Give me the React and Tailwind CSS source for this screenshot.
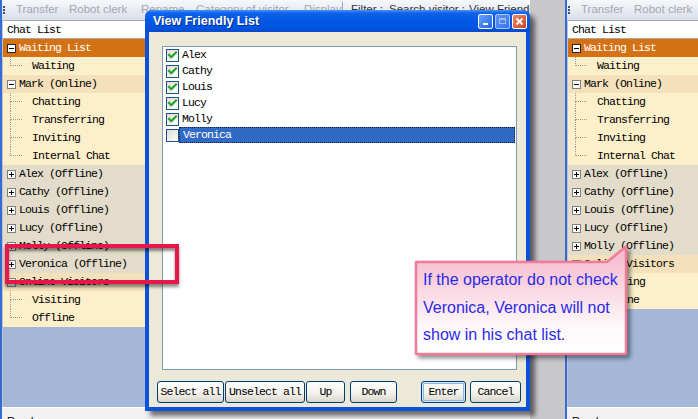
import React from 'react';

const mono = "font-['Liberation_Mono','DejaVu_Sans_Mono',monospace] text-[11.5px] tracking-[-0.9px]";

function Expander({ open, dark }) {
  return (
    <svg width="9" height="9" viewBox="0 0 9 9" className="shrink-0">
      <rect x="0.5" y="0.5" width="8" height="8" fill="#fff" stroke={dark ? '#2a2a2a' : '#808080'} />
      <line x1="2" y1="4.5" x2="7" y2="4.5" stroke="#000" />
      {!open && <line x1="4.5" y1="2" x2="4.5" y2="7" stroke="#000" />}
    </svg>
  );
}

const groupBg = {
  orange: 'bg-[#d47115] text-white',
  tan: 'bg-[#f4e1bb] text-black',
  grey: 'bg-[#e3dcca] text-black',
};

function TreeRow({ item }) {
  if (item.g) {
    return (
      <div className={`h-[18px] shrink-0 flex items-center pl-[4px] whitespace-nowrap ${groupBg[item.bg]}`}>
        <Expander open={item.open} dark={item.bg === 'orange'} />
        <span className={`ml-[3px] ${mono}`}>{item.label}</span>
      </div>
    );
  }
  return (
    <div className="h-[18px] shrink-0 flex items-stretch pl-[7px] bg-[#fcefca] whitespace-nowrap">
      <div className="w-[12px] flex flex-col shrink-0">
        <div className="h-[9px] border-l border-b border-dotted border-[#9a9a9a]" />
        <div className={`h-[9px] ${item.last ? '' : 'border-l border-dotted border-[#9a9a9a]'}`} />
      </div>
      <span className={`ml-[10px] self-center text-black ${mono}`}>{item.label}</span>
    </div>
  );
}

const offline = (n) => ({ g: true, open: false, bg: 'grey', label: `${n} (Offline)` });

const leftRows = [
  { g: true, open: true, bg: 'orange', label: 'Waiting List' },
  { label: 'Waiting', last: true },
  { g: true, open: true, bg: 'tan', label: 'Mark (Online)' },
  { label: 'Chatting' },
  { label: 'Transferring' },
  { label: 'Inviting' },
  { label: 'Internal Chat', last: true },
  offline('Alex'),
  offline('Cathy'),
  offline('Louis'),
  offline('Lucy'),
  offline('Molly'),
  offline('Veronica'),
  { g: true, open: true, bg: 'tan', label: 'Online Visitors' },
  { label: 'Visiting' },
  { label: 'Offline', last: true },
];
const rightRows = leftRows.filter((r) => r.label !== 'Veronica (Offline)');

function Grip() {
  return (
    <div className="ml-[1px] mr-[11px] flex flex-col gap-[1px] shrink-0">
      <div className="w-[2px] h-[2px] bg-[#3a5080]" />
      <div className="w-[2px] h-[2px] bg-[#3a5080]" />
      <div className="w-[2px] h-[2px] bg-[#3a5080]" />
    </div>
  );
}

function Toolbar() {
  return (
    <div className="h-[20px] shrink-0 flex items-center overflow-hidden whitespace-nowrap bg-[linear-gradient(to_bottom,#f7f8fb,#e4e8f0_60%,#d8dfeb)] font-['Liberation_Sans',Arial,sans-serif] text-[11.5px] text-[#a4a6ae]">
      <Grip />
      <span className="w-[53px] shrink-0">Transfer</span>
      <span className="w-[72px] shrink-0">Robot clerk</span>
      <span className="w-[55px] shrink-0">Rename</span>
      <span className="w-[108px] shrink-0">Category of visitor</span>
      <span className="w-[38px] shrink-0">Display</span>
      <div className="w-px h-[16px] bg-[#9fa8b8] mr-[8px] shrink-0" />
      <span className="w-[38px] shrink-0 text-[#333]">Filter :</span>
      <span className="w-[80px] shrink-0 text-[#333]">Search visitor :</span>
      <span className="shrink-0 text-[#333]">View Friendly</span>
    </div>
  );
}

function AppWindow({ rows, className, panelClass }) {
  return (
    <div className={`h-full flex flex-col border-l-[2px] border-[#356bd6] bg-[#ece9d8] overflow-hidden ${className}`}>
      <Toolbar />
      <div className="flex-1 flex min-h-0">
        <div className={`flex flex-col border-l border-[#c0c4cc] ${panelClass}`}>
          <div className={`h-[19px] shrink-0 flex items-center pl-[4px] bg-white border-y border-[#a8a8a8] text-black ${mono}`}>
            Chat List
          </div>
          {rows.map((r, i) => (
            <TreeRow key={i} item={r} />
          ))}
          <div className="flex-1 bg-[#a4b7d6]" />
        </div>
        <div className="flex-1 bg-[#d4d0c8]" />
      </div>
      <div className="h-[12px] shrink-0 overflow-hidden bg-[#f1f1f1] border-t border-white pl-[5px] pt-[7px] font-['Liberation_Sans',Arial,sans-serif] text-[11px] leading-[12px] text-black">
        Ready
      </div>
    </div>
  );
}

function Check({ checked }) {
  return (
    <svg width="13" height="13" viewBox="0 0 13 13" className="shrink-0">
      <defs>
        <linearGradient id="cbg" x1="0" y1="0" x2="1" y2="1">
          <stop offset="0" stopColor="#dcdcd6" />
          <stop offset="1" stopColor="#ffffff" />
        </linearGradient>
      </defs>
      <rect x="0.5" y="0.5" width="12" height="12" fill="url(#cbg)" stroke="#1c5180" />
      {checked && (
        <path d="M3 5.8 L5.2 8.2 L10 3.4" stroke="#21a121" strokeWidth="2" fill="none" strokeLinecap="square" />
      )}
    </svg>
  );
}

function Btn({ w, children, def }) {
  return (
    <div
      className={`h-[22px] shrink-0 ${w} rounded-[3px] border border-[#003c74] bg-[linear-gradient(to_bottom,#ffffff,#f3f2ec_55%,#d9d5cb)] flex items-center justify-center text-black ${mono} ${
        def ? 'shadow-[inset_0_0_0_1px_#cee7ff,inset_0_0_0_2px_#8fb2ea]' : ''
      }`}
    >
      {children}
    </div>
  );
}

const friends = [
  { n: 'Alex', c: true },
  { n: 'Cathy', c: true },
  { n: 'Louis', c: true },
  { n: 'Lucy', c: true },
  { n: 'Molly', c: true },
  { n: 'Veronica', c: false, sel: true },
];

function Dialog() {
  return (
    <div className="absolute left-[145px] top-[10px] w-[385px] h-[401px] flex flex-col rounded-t-[7px] bg-[#0a53d8] shadow-[5px_5px_5px_rgba(0,0,0,0.55)]">
      <div className="h-[22px] shrink-0 flex items-center pl-[8px] pr-[3px] rounded-t-[7px] bg-[linear-gradient(to_bottom,#4a92f8_0%,#0f62ea_14%,#0058e6_45%,#0053de_85%,#0a48c8_100%)]">
        <span className="text-white font-bold text-[12.5px] font-['Liberation_Sans',Arial,sans-serif] [text-shadow:1px_1px_0_#0b2f8a]">
          View Friendly List
        </span>
        <div className="ml-auto flex gap-[2px]">
          <div className="w-[15px] h-[15px] rounded-[2px] border border-white bg-[linear-gradient(135deg,#6aa2fb,#2465e6)] flex items-end pl-[4px] pb-[3px]">
            <div className="w-[5px] h-[2px] bg-white" />
          </div>
          <div className="w-[15px] h-[15px] rounded-[2px] border border-[#a8c4f6] bg-[linear-gradient(135deg,#5d95f5,#3a75ea)] flex items-center justify-center">
            <div className="w-[7px] h-[6px] border border-[#9cbcf2] border-t-2" />
          </div>
          <div className="w-[15px] h-[15px] rounded-[2px] border border-white bg-[linear-gradient(135deg,#ec8a66,#cd4420)] flex items-center justify-center">
            <svg width="9" height="9" viewBox="0 0 9 9">
              <path d="M1.5 1.5 L7.5 7.5 M7.5 1.5 L1.5 7.5" stroke="#fff" strokeWidth="1.8" />
            </svg>
          </div>
        </div>
      </div>
      <div className="flex-1 mx-[4px] mb-[4px] bg-[#ece9d8] flex flex-col">
        <div className="mt-[14px] ml-[13px] w-[355px] h-[324px] border border-[#7f9db9] bg-white flex flex-col">
          {friends.map((f) => (
            <div key={f.n} className="h-[16px] shrink-0 flex items-center pl-[3px]">
              <Check checked={f.c} />
              <div
                className={`h-[16px] flex items-center pl-[3px] ${mono} ${
                  f.sel ? 'flex-1 mr-[1px] bg-[#316ac5] text-white border border-dotted border-[#10204a]' : 'text-black'
                }`}
              >
                {f.n}
              </div>
            </div>
          ))}
        </div>
        <div className="mt-[11px] pl-[8px] flex">
          <Btn w="w-[67px]">Select all</Btn>
          <div className="w-px" />
          <Btn w="w-[80px]">Unselect all</Btn>
          <div className="w-px" />
          <Btn w="w-[39px]">Up</Btn>
          <div className="w-[5px]" />
          <Btn w="w-[47px]">Down</Btn>
          <div className="w-[24px]" />
          <Btn w="w-[45px]" def>
            Enter
          </Btn>
          <div className="w-[4px]" />
          <Btn w="w-[51px]">Cancel</Btn>
        </div>
      </div>
    </div>
  );
}

function Callout() {
  return (
    <div className="absolute left-[414px] top-[245px] w-[220px] h-[115px]">
      <svg className="absolute inset-0 drop-shadow-[3px_3px_2px_rgba(0,0,0,0.45)]" width="220" height="115" viewBox="0 0 220 115">
        <defs>
          <linearGradient id="cg" x1="0" y1="0" x2="0" y2="1">
            <stop offset="0" stopColor="#f6b6ca" />
            <stop offset="0.35" stopColor="#f9d3df" />
            <stop offset="0.75" stopColor="#fff8fa" />
            <stop offset="1" stopColor="#ffffff" />
          </linearGradient>
        </defs>
        <path d="M2 17 H193 L212 1.5 V109 H2 Z" fill="url(#cg)" stroke="#f07c9a" strokeWidth="2.5" strokeLinejoin="round" />
      </svg>
      <div className="relative pt-[21px] pl-[9px] text-[16px] leading-[27.5px] text-[#2a2ae6] font-['Liberation_Sans',Arial,sans-serif] whitespace-nowrap">
        If the operator do not check
        <br />
        Veronica, Veronica will not
        <br />
        show in his chat list.
      </div>
    </div>
  );
}

export default function App() {
  return (
    <div className="relative w-[698px] h-[419px] overflow-hidden bg-[#c8c8cb] flex">
      <AppWindow rows={leftRows} className="w-[530px] shrink-0" panelClass="w-[180px] shrink-0" />
      <div className="w-[35px] shrink-0 bg-[#c8c8cb]" />
      <AppWindow rows={rightRows} className="flex-1" panelClass="w-[180px] shrink-0" />
      <Dialog />
      <div className="absolute left-[5px] top-[244px] w-[174px] h-[40px] border-[4px] border-[#e8174a] shadow-[0_3px_3px_rgba(0,0,0,0.45),inset_0_3px_3px_rgba(0,0,0,0.45)]" />
      <Callout />
    </div>
  );
}
